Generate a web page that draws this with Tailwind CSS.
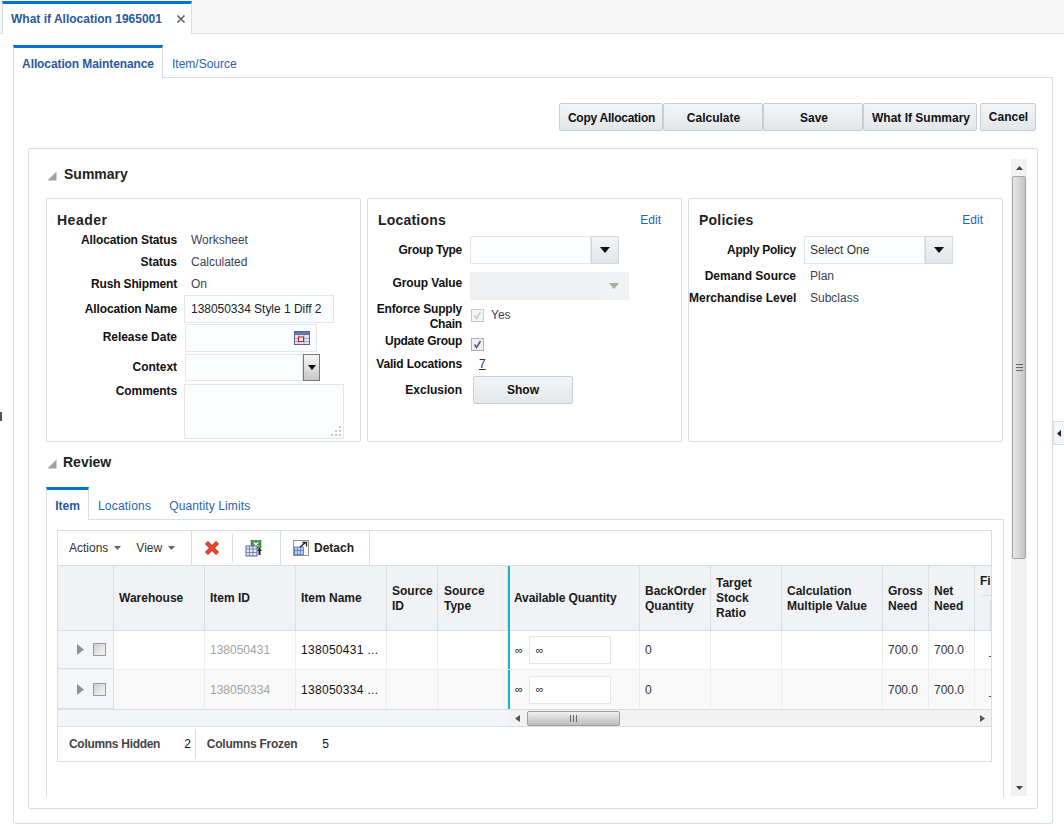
<!doctype html>
<html lang="en">
<head>
<meta charset="UTF-8" />
<title>What if Allocation</title>
<script src="https://cdn.jsdelivr.net/npm/@tailwindcss/browser@4"></script>
</head>
<body class="relative h-[825px] w-[1064px] overflow-hidden bg-white font-['Liberation_Sans',Arial,sans-serif] text-[12px] text-[#111]">

<!-- Document tab bar -->
<div class="flex h-[34px] border-b border-[#d6dfe6] bg-[#f6f6f6]">
  <div class="mt-[1px] ml-[2px] flex h-[33px] w-[190px] items-center justify-between border-t-[3px] border-r border-l border-t-[#0572ce] border-r-[#d6dfe6] border-l-[#d6dfe6] bg-white pr-[4px] pl-[8px]">
    <span class="text-[12px] font-bold text-[#2a5a9e]">What if Allocation 1965001</span>
    <svg width="10" height="10" viewBox="0 0 10 10" class="mr-[1px]"><path d="M1.5 1.5l7 7M8.500 1.5l-7 7" stroke="#666" stroke-width="1.7"/></svg>
  </div>
</div>

<!-- Outer panel -->
<div class="ml-[13px] h-[790px] w-[1040px] pt-[11px]">
  <div class="flex h-[33px] border-b border-[#d6dfe6]">
    <div class="flex h-[33px] w-[150px] items-center justify-center border-t-[3px] border-r border-l border-t-[#0572ce] border-r-[#d6dfe6] border-l-[#d6dfe6] bg-white pt-[1px] font-bold tracking-[-0.1px] text-[#2a5a9e]">Allocation Maintenance</div>
    <div class="flex items-center pt-[6px] pl-[9px] text-[#2a62b4]">Item/Source</div>
  </div>
  <div class="h-[746px] rounded-b-[3px] border-x border-b border-[#d6dfe6] pt-[25px] pl-[14px]">
    <!-- Action buttons -->
    <div class="flex h-[29px] pl-[531px] font-bold">
      <button class="h-[28px] w-[104px] rounded-[2px] border border-[#c4ced7] bg-linear-to-b from-[#f3f5f6] to-[#e3e7ea] pt-[1px] pl-[1px] tracking-[-0.25px]">Copy Allocation</button>
      <button class="h-[28px] w-[100px] rounded-[2px] border border-[#c4ced7] bg-linear-to-b from-[#f3f5f6] to-[#e3e7ea] pt-[1px] pl-[1px]">Calculate</button>
      <button class="h-[28px] w-[100px] rounded-[2px] border border-[#c4ced7] bg-linear-to-b from-[#f3f5f6] to-[#e3e7ea] pt-[1px] pl-[2px]">Save</button>
      <button class="h-[28px] w-[114px] rounded-[2px] border border-[#c4ced7] bg-linear-to-b from-[#f3f5f6] to-[#e3e7ea] pt-[1px] pl-[2px]">What If Summary</button>
      <button class="ml-[3px] h-[28px] w-[56px] rounded-[2px] border border-[#c4ced7] bg-linear-to-b from-[#f3f5f6] to-[#e3e7ea] pl-[1px]">Cancel</button>
    </div>

    <!-- Scrolling panel -->
    <div class="mt-[16px] flex h-[661px] w-[1010px] rounded-[2px] border border-[#d6dfe6] pl-[17px]">
      <div class="w-[958px]">
        <!-- Summary -->
        <div class="flex h-[48px] items-center pt-[2px]">
          <svg width="10" height="10" viewBox="0 0 10 10" class="mt-[3px] mr-[7px] ml-[1px]"><path d="M9.500 .5v9h-9z" fill="#a0a0a0"/></svg>
          <span class="text-[14px] font-bold text-[#222]">Summary</span>
        </div>
        <div class="mt-[1px] flex gap-[6px]">
          <!-- Header box -->
          <div class="h-[244px] w-[315px] rounded-[2px] border border-[#d6dfe6] pt-[13px] pl-[10px]">
            <div class="h-[17px] text-[14px] leading-[16px] font-bold tracking-[0.5px] text-[#222]">Header</div>
            <div class="-ml-[10px] tracking-[-0.03px]">
              <div class="flex h-[22px] items-center"><span class="w-[130px] text-right font-bold tracking-[-0.12px]">Allocation Status</span><span class="ml-[14px] text-[#3b4256]">Worksheet</span></div>
              <div class="flex h-[22px] items-center"><span class="w-[130px] text-right font-bold">Status</span><span class="ml-[14px] text-[#3b4256]">Calculated</span></div>
              <div class="flex h-[22px] items-center"><span class="w-[130px] text-right font-bold tracking-[-0.15px]">Rush Shipment</span><span class="ml-[14px] text-[#3b4256]">On</span></div>
              <div class="flex h-[28px] items-center"><span class="w-[130px] pb-[1px] text-right font-bold tracking-[-0.12px]">Allocation Name</span><span class="ml-[7px] flex h-[28px] w-[150px] items-center border border-[#e3e6ea] bg-[#fcfdfe] pl-[6px] text-[#222]">138050334 Style 1 Diff 2</span></div>
              <div class="mt-[1px] flex h-[28px] items-center"><span class="w-[130px] pb-[2px] text-right font-bold">Release Date</span>
                <span class="ml-[8px] flex h-[28px] w-[132px] items-center justify-end border border-[#e3e6ea] bg-[#fcfdfe] pr-[6px]">
                  <svg width="16" height="14" viewBox="0 0 16 14"><rect x=".5" y=".5" width="15" height="13" fill="#e4e6f2" stroke="#5a5f8e"/><rect x="1" y="1" width="14" height="3" fill="#6f74a8"/><path d="M5 4v9M10 4v9M1 7.500h14M1 10.500h14" stroke="#a0a4c8"/><rect x="4.500" y="6" width="5" height="4.500" fill="#fff" stroke="#e01010"/></svg>
                </span>
              </div>
              <div class="mt-[2px] flex h-[27px] items-center"><span class="w-[130px] pb-[2px] text-right font-bold">Context</span>
                <span class="ml-[8px] flex h-[27px] w-[118px] border border-[#e3e6ea] bg-[#fcfdfe]"></span>
                <span class="flex h-[27px] w-[17px] items-center justify-center border border-[#777] bg-linear-to-b from-[#f5f5f5] to-[#c8c8c8]"><svg width="8" height="5" viewBox="0 0 8 5"><path d="M0 0h8L4 5z" fill="#111"/></svg></span>
              </div>
              <div class="mt-[3px] flex items-start"><span class="-mt-[2px] w-[130px] text-right font-bold tracking-[-0.1px]">Comments</span>
                <span class="relative ml-[7px] block h-[55px] w-[160px] border border-[#e3e6ea] bg-[#fcfdfe]">
                  <svg width="12" height="12" viewBox="0 0 12 12" class="absolute right-[1px] bottom-[1px]"><path d="M9 1h2v2H9zM5 5h2v2H5zM9 5h2v2H9zM1 9h2v2H1zM5 9h2v2H5zM9 9h2v2H9z" fill="#c2c8ce"/></svg>
                </span>
              </div>
            </div>
          </div>

          <!-- Locations box -->
          <div class="h-[244px] w-[315px] rounded-[2px] border border-[#d6dfe6] pt-[13px]">
            <div class="flex h-[16px] items-center justify-between pr-[20px] pl-[10px]"><span class="text-[14px] font-bold tracking-[0.2px] text-[#222]">Locations</span><span class="text-[#2a62b4]">Edit</span></div>
            <div class="mt-[8px] flex h-[28px] items-center"><span class="w-[94px] pb-[1px] text-right font-bold tracking-[-0.3px]">Group Type</span>
              <span class="ml-[8px] h-[28px] w-[121px] border border-[#e3e6ea] bg-[#fcfdfe]"></span>
              <span class="flex h-[28px] w-[28px] items-center justify-center border border-[#d3d9de] bg-linear-to-b from-[#f2f4f5] to-[#e2e6e9]"><svg width="10" height="6" viewBox="0 0 10 6"><path d="M0 0h10L5 6z" fill="#111"/></svg></span>
            </div>
            <div class="mt-[8px] flex h-[28px] items-center"><span class="w-[94px] pb-[6px] text-right font-bold tracking-[-0.1px]">Group Value</span>
              <span class="ml-[8px] h-[28px] w-[131px] bg-[#eeeff0]"></span>
              <span class="flex h-[28px] w-[28px] items-center justify-center border-l border-[#f5f6f6] bg-[#f1f2f3] pr-[3px]"><svg width="10" height="6" viewBox="0 0 10 6"><path d="M0 0h10L5 6z" fill="#aaa"/></svg></span>
            </div>
            <div class="mt-[2px] flex h-[30px] items-center"><span class="w-[94px] text-right leading-[15px] font-bold tracking-[-0.2px]">Enforce Supply Chain</span>
              <span class="mb-[4px] ml-[9px] flex items-center">
                <span class="flex h-[13px] w-[13px] items-center justify-center border border-[#c6c9cc] bg-[#f2f3f4]"><svg width="9" height="9" viewBox="0 0 9 9"><path d="M1.500 4.500l2 3 4-6.500" stroke="#c4c4c4" stroke-width="1.4" fill="none"/></svg></span>
                <span class="ml-[7px] text-[#3b4256]">Yes</span>
              </span>
            </div>
            <div class="mt-[4px] flex h-[17px] items-center"><span class="w-[94px] pb-[7px] text-right font-bold tracking-[-0.25px]">Update Group</span>
              <span class="ml-[9px] flex h-[13px] w-[13px] items-center justify-center border border-[#a8adb3] bg-[#eef0f2]"><svg width="9" height="9" viewBox="0 0 9 9"><path d="M1.500 4.500l2 3 4-6.500" stroke="#4a5a96" stroke-width="1.5" fill="none"/></svg></span>
            </div>
            <div class="mt-[1px] flex h-[20px] items-center"><span class="w-[94px] text-right font-bold tracking-[-0.15px]">Valid Locations</span><span class="ml-[17px] text-[#333] underline">7</span></div>
            <div class="mt-[2px] flex h-[28px] items-center"><span class="w-[94px] text-right font-bold">Exclusion</span>
              <button class="ml-[11px] h-[28px] w-[100px] rounded-[2px] border border-[#c4ced7] bg-linear-to-b from-[#f3f5f6] to-[#e3e7ea] font-bold">Show</button>
            </div>
          </div>

          <!-- Policies box -->
          <div class="h-[244px] w-[315px] rounded-[2px] border border-[#d6dfe6] pt-[13px]">
            <div class="flex h-[16px] items-center justify-between pr-[19px] pl-[10px]"><span class="text-[14px] font-bold tracking-[0.2px] text-[#222]">Policies</span><span class="text-[#2a62b4]">Edit</span></div>
            <div class="mt-[8px] flex h-[28px] items-center"><span class="w-[107px] pb-[1px] text-right font-bold tracking-[-0.25px]">Apply Policy</span>
              <span class="ml-[8px] flex h-[28px] w-[121px] items-center border border-[#e3e6ea] bg-[#fcfdfe] pl-[5px] text-[#333]">Select One</span>
              <span class="flex h-[28px] w-[28px] items-center justify-center border border-[#d3d9de] bg-linear-to-b from-[#f2f4f5] to-[#e2e6e9]"><svg width="10" height="6" viewBox="0 0 10 6"><path d="M0 0h10L5 6z" fill="#111"/></svg></span>
            </div>
            <div class="flex h-[22px] items-center pt-[1px]"><span class="w-[107px] text-right font-bold whitespace-nowrap">Demand Source</span><span class="ml-[14px] text-[#3b4256]">Plan</span></div>
            <div class="flex h-[22px] items-center pt-[1px]"><span class="w-[107px] text-right font-bold whitespace-nowrap">Merchandise Level</span><span class="ml-[14px] text-[#3b4256]">Subclass</span></div>
          </div>
        </div>

        <!-- Review -->
        <div class="flex h-[42px] items-center pb-[2px]">
          <svg width="10" height="10" viewBox="0 0 10 10" class="mt-[3px] mr-[6px] ml-[1px]"><path d="M9.500 .5v9h-9z" fill="#a0a0a0"/></svg>
          <span class="text-[14px] font-bold text-[#222]">Review</span>
        </div>
        <div class="mt-[3px] flex h-[33px] border-b border-[#d6dfe6]">
          <div class="flex h-[33px] w-[43px] items-center justify-center border-t-[3px] border-r border-l border-t-[#0572ce] border-r-[#d6dfe6] border-l-[#d6dfe6] bg-white pt-[1px] font-bold text-[#2a5a9e]">Item</div>
          <div class="flex items-center pt-[5px] pl-[9px] tracking-[0.2px] text-[#2a62b4]">Locations</div>
          <div class="flex items-center pt-[5px] pl-[18px] tracking-[0.12px] text-[#2a62b4]">Quantity Limits</div>
        </div>
        <div class="h-[277px] border-x border-[#d6dfe6] pt-[10px] pl-[10px]">
          <!-- Table -->
          <div class="h-[232px] w-[935px] overflow-hidden border border-[#d6dfe6]">
            <div class="flex h-[35px] items-stretch border-b border-[#d6dfe6]">
              <div class="flex w-[134px] items-center border-r border-[#d6dfe6] pl-[11px] text-[#333]">
                <span>Actions</span><svg width="7" height="4" viewBox="0 0 7 4" class="ml-[6px]"><path d="M0 0h7L3.500 4z" fill="#666"/></svg>
                <span class="ml-[15px]">View</span><svg width="7" height="4" viewBox="0 0 7 4" class="ml-[6px]"><path d="M0 0h7L3.500 4z" fill="#666"/></svg>
              </div>
              <div class="flex w-[40px] items-center justify-center">
                <svg width="16" height="16" viewBox="0 0 16 16"><path d="M2.500 2.500l11 11M13.500 2.500l-11 11" stroke="#a82a18" stroke-width="4.200"/><path d="M2.500 2.500l11 11M13.500 2.500l-11 11" stroke="#f0482c" stroke-width="2.800"/></svg>
              </div>
              <div class="my-[3px] border-l border-[#d6dfe6]"></div>
              <div class="flex w-[48px] items-center justify-center border-r border-[#d6dfe6] pr-[6px]">
                <svg width="18" height="17" viewBox="0 0 18 17"><rect x="6" y=".5" width="10" height="8" fill="#4d9a48" stroke="#2d6d2a" stroke-width=".6"/><path d="M9 2.500l4 4M13 2.500l-4 4" stroke="#fff" stroke-width="1.200"/><rect x="1" y="6" width="11" height="10" fill="#e7e8f4" stroke="#5a5f9a"/><path d="M1 9h11M1 12.500h11M4.500 6v10M8 6v10" stroke="#6d72a8" stroke-width=".8"/><path d="M13.500 15v-4H12l2.500-3 2.500 3h-1.500v4z" fill="#222"/></svg>
              </div>
              <div class="flex w-[89px] items-center border-r border-[#d6dfe6] pl-[12px] font-bold text-[#222]">
                <svg width="16" height="16" viewBox="0 0 16 16" class="mr-[5px]"><rect x=".5" y=".5" width="15" height="15" fill="#fff" stroke="#222" stroke-dasharray="1 1"/><rect x="1.500" y="7" width="9" height="7.500" fill="#bcd0ee" stroke="#4a6cb0" stroke-width=".8"/><path d="M4.500 7v7M7.500 7v7M1.500 10.500h9" stroke="#4a6cb0" stroke-width=".7"/><path d="M7 7l5-4M9.500 2.500h4v4" stroke="#222" stroke-width="1.300" fill="none"/></svg>
                Detach
              </div>
            </div>
            <!-- Header row -->
            <div class="grid h-[65px] grid-cols-[56px_91px_91px_91px_51px_70px_132px_71px_71px_101px_46px_46px_40px] border-b border-[#d6dfe6] bg-[#f0f2f5] leading-[15px] font-bold text-[#1a1a1a]">
              <div class="border-r border-[#d6dfe6]"></div>
              <div class="flex items-center border-r border-[#d6dfe6] pl-[5px]">Warehouse</div>
              <div class="flex items-center border-r border-[#d6dfe6] pl-[5px]">Item ID</div>
              <div class="flex items-center border-r border-[#d6dfe6] pl-[5px]">Item Name</div>
              <div class="flex items-center border-r border-[#d6dfe6] pl-[5px]">Source ID</div>
              <div class="flex items-center border-r border-[#d6dfe6] pl-[6px]">Source Type</div>
              <div class="flex items-center border-r border-l-[2px] border-r-[#d6dfe6] border-l-[#1cb2d0] pl-[4px] tracking-[-0.1px]">Available Quantity</div>
              <div class="flex items-center border-r border-[#d6dfe6] pl-[5px]">BackOrder Quantity</div>
              <div class="flex items-center border-r border-[#d6dfe6] pl-[5px]">Target Stock Ratio</div>
              <div class="flex items-center border-r border-[#d6dfe6] pl-[5px]">Calculation Multiple Value</div>
              <div class="flex items-center border-r border-[#d6dfe6] pl-[5px]">Gross Need</div>
              <div class="flex items-center border-r border-[#d6dfe6] pl-[5px]">Net Need</div>
              <div class="pt-[8px] pl-[5px]">
                <div class="h-[21px] overflow-hidden whitespace-nowrap">Fill Rate</div>
                <div class="ml-[2px] flex h-[36px] border-t border-[#d6dfe6] pl-[8px]"><span class="mt-[4px] h-[30px] w-full border-l border-[#d6dfe6]"></span></div>
              </div>
            </div>
            <!-- Row 1 -->
            <div class="grid h-[39px] grid-cols-[56px_91px_91px_91px_51px_70px_132px_71px_71px_101px_46px_46px_40px] border-b border-[#eceff2] bg-white">
              <div class="flex items-center border-r border-b border-[#d6dfe6] bg-[#f4f6f9] pl-[19px]">
                <svg width="7" height="11" viewBox="0 0 7 11"><path d="M0 0l7 5.500L0 11z" fill="#8d9296"/></svg>
                <span class="ml-[9px] h-[13px] w-[13px] border border-[#9a9a9a] bg-linear-to-br from-[#d0d0d0] to-[#f8f8f8]"></span>
              </div>
              <div class="border-r border-[#eceff2]"></div>
              <div class="flex items-center border-r border-[#eceff2] pl-[5px] text-[#a3a3a3]">138050431</div>
              <div class="flex items-center border-r border-[#eceff2] pl-[5px] tracking-[0.3px] text-[#111]">138050431 ...</div>
              <div class="border-r border-[#eceff2]"></div>
              <div class="border-r border-[#eceff2]"></div>
              <div class="flex items-center border-r border-l-[2px] border-r-[#eceff2] border-l-[#1cb2d0] pl-[5px] text-[11px] text-[#222]"><span>∞</span>
                <span class="ml-[6px] flex h-[28px] w-[82px] items-center border border-[#e3e6ea] pl-[6px]">∞</span></div>
              <div class="flex items-center border-r border-[#eceff2] pl-[5px] text-[#333]">0</div>
              <div class="border-r border-[#eceff2]"></div>
              <div class="border-r border-[#eceff2]"></div>
              <div class="flex items-center border-r border-[#eceff2] pl-[5px] text-[#333]">700.0</div>
              <div class="flex items-center border-r border-[#eceff2] pl-[5px] text-[#333]">700.0</div>
              <div class="flex items-center pl-[14px] text-[#333]">_</div>
            </div>
            <!-- Row 2 -->
            <div class="grid h-[39px] grid-cols-[56px_91px_91px_91px_51px_70px_132px_71px_71px_101px_46px_46px_40px] bg-[#f9f9f9]">
              <div class="flex items-center border-r border-b border-[#d6dfe6] bg-[#f4f6f9] pl-[19px]">
                <svg width="7" height="11" viewBox="0 0 7 11"><path d="M0 0l7 5.500L0 11z" fill="#8d9296"/></svg>
                <span class="ml-[9px] h-[13px] w-[13px] border border-[#9a9a9a] bg-linear-to-br from-[#d0d0d0] to-[#f8f8f8]"></span>
              </div>
              <div class="border-r border-[#eceff2]"></div>
              <div class="flex items-center border-r border-[#eceff2] pl-[5px] text-[#a3a3a3]">138050334</div>
              <div class="flex items-center border-r border-[#eceff2] pl-[5px] tracking-[0.3px] text-[#111]">138050334 ...</div>
              <div class="border-r border-[#eceff2]"></div>
              <div class="border-r border-[#eceff2]"></div>
              <div class="flex items-center border-r border-l-[2px] border-r-[#eceff2] border-l-[#1cb2d0] pl-[5px] text-[11px] text-[#222]"><span>∞</span>
                <span class="ml-[6px] flex h-[28px] w-[82px] items-center border border-[#e3e6ea] bg-white pl-[6px]">∞</span></div>
              <div class="flex items-center border-r border-[#eceff2] pl-[5px] text-[#333]">0</div>
              <div class="border-r border-[#eceff2]"></div>
              <div class="border-r border-[#eceff2]"></div>
              <div class="flex items-center border-r border-[#eceff2] pl-[5px] text-[#333]">700.0</div>
              <div class="flex items-center border-r border-[#eceff2] pl-[5px] text-[#333]">700.0</div>
              <div class="flex items-center pl-[14px] text-[#333]">_</div>
            </div>
            <!-- Horizontal scrollbar -->
            <div class="flex h-[18px] border-y border-[#d6dfe6] bg-[#f3f5f9]">
              <div class="w-[450px]"></div>
              <div class="flex flex-1 items-center bg-[#f2f2f2]">
                <svg width="5" height="7" viewBox="0 0 5 7" class="ml-[7px]"><path d="M5 0v7L0 3.500z" fill="#555"/></svg>
                <div class="ml-[7px] flex h-[15px] w-[93px] items-center justify-center rounded-[2px] border border-[#a0a0a0] bg-linear-to-b from-[#f0f0f0] to-[#bdbdbd]">
                  <svg width="7" height="7" viewBox="0 0 7 7"><path d="M.5 0v7M3.500 0v7M6.500 0v7" stroke="#666"/></svg>
                </div>
                <svg width="5" height="7" viewBox="0 0 5 7" class="mr-[6px] ml-auto"><path d="M0 0v7l5-3.500z" fill="#555"/></svg>
              </div>
            </div>
            <!-- Footer -->
            <div class="flex h-[34px] items-center font-bold text-[#444]">
              <span class="ml-[11px] tracking-[-0.3px]">Columns Hidden</span>
              <span class="ml-[24px] font-normal text-[#111]">2</span>
              <span class="ml-[4px] h-[30px] border-l border-[#d6dfe6]"></span>
              <span class="ml-[11px] tracking-[-0.25px]">Columns Frozen</span>
              <span class="ml-[25px] font-normal text-[#111]">5</span>
            </div>
          </div>
        </div>
      </div>

      <!-- Vertical scrollbar -->
      <div class="mt-[10px] ml-[7px] flex h-[637px] w-[16px] flex-col items-center bg-[#f2f2f2]">
        <div class="flex h-[17px] items-center"><svg width="7" height="4" viewBox="0 0 7 4"><path d="M0 4h7L3.500 0z" fill="#444"/></svg></div>
        <div class="flex h-[383px] w-[14px] items-center justify-center rounded-[2px] border border-[#a6a6a6] bg-linear-to-r from-[#e8e8e8] to-[#c4c4c4]">
          <svg width="7" height="7" viewBox="0 0 7 7"><path d="M0 .5h7M0 3.500h7M0 6.500h7" stroke="#666"/></svg>
        </div>
        <div class="mt-auto flex h-[17px] items-center"><svg width="7" height="4" viewBox="0 0 7 4"><path d="M0 0h7L3.500 4z" fill="#444"/></svg></div>
      </div>
    </div>
  </div>
</div>

<!-- Splitter handles -->
<div class="absolute top-[421px] right-0 flex h-[24px] w-[11px] items-center justify-center border border-r-0 border-[#d6dfe6] bg-[#f4f5f6]"><svg width="4" height="7" viewBox="0 0 4 7"><path d="M4 0v7L0 3.500z" fill="#222"/></svg></div>
<div class="absolute top-[412px] left-0 h-[9px] w-[2px] bg-[#555]"></div>
</body>
</html>
